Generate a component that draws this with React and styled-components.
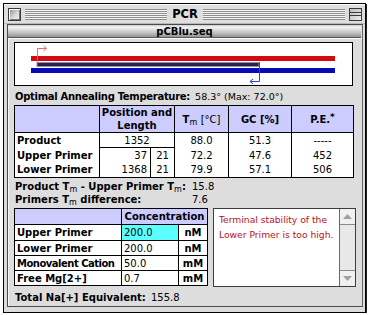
import React from 'react';
import styled, { createGlobalStyle } from 'styled-components';

const GlobalStyle = createGlobalStyle`
  html, body { margin: 0; padding: 0; background: #fff; }
  body { font-family: "DejaVu Sans", sans-serif; }
  * { box-sizing: border-box; }
`;

const BOLD = `"DejaVu Sans", "Liberation Sans", sans-serif`;
const REG = `"DejaVu Sans", "Liberation Sans", sans-serif`;

const Window = styled.div`
  margin: 3px 0 0 3px;
  width: 363px;
  height: 310px;
  border: 1px solid #000;
  box-shadow: 1px 1px 0 #222;
  background: #d6d6d6;
  display: flex;
  flex-direction: column;
`;

const TitleBar = styled.div`
  height: 19px;
  display: flex;
  align-items: center;
  padding: 0 3px 0 4px;
  gap: 4px;
  background: #dedede;
  border-top: 1px solid #fff;
`;

const CloseBox = styled.div`
  width: 13px;
  height: 13px;
  border: 1px solid #3a3a3a;
  background: linear-gradient(135deg, #8c8c8c 0%, #d8d8d8 55%, #f4f4f4 100%);
  box-shadow: inset 1px 1px 0 #fff, inset -1px -1px 0 #777;
`;

const ShadeBox = styled.div`
  width: 13px;
  height: 13px;
  border: 1px solid #3a3a3a;
  background:
    linear-gradient(#3a3a3a, #3a3a3a) 0 3px / 100% 1px no-repeat,
    linear-gradient(#3a3a3a, #3a3a3a) 0 6px / 100% 1px no-repeat,
    linear-gradient(135deg, #bbb, #eee);
`;

const Stripes = styled.div`
  flex: 1;
  height: 11px;
  background: repeating-linear-gradient(to bottom, #8e8e8e 0 1px, #f6f6f6 1px 2px);
`;

const Title = styled.div`
  font-family: ${BOLD};
  font-weight: 700;
  font-size: 11.5px;
  padding: 0 1px;
  color: #000;
`;

const Frame = styled.div`
  flex: 1;
  display: flex;
  padding: 0 2px 5px 3px;
  background: #dcdcdc;
  border-top: 1px solid #b8b8b8;
`;

const DocArea = styled.div`
  flex: 1;
  display: flex;
  flex-direction: column;
  border: 1px solid #4a4a4a;
  border-right-color: #666;
  background: #dddddd;
`;

const DocBar = styled.div`
  height: 13px;
  display: flex;
  align-items: center;
  justify-content: center;
  font-family: ${BOLD};
  font-weight: 700;
  font-size: 10px;
  background: linear-gradient(to bottom, #cfcfcf 0%, #f2f2f2 20%, #d2d2d2 50%, #a8a8a8 85%, #909090 100%);
  border-bottom: 1px solid #5a5a5a;
  margin: 0 1px 0 0;
`;

const Content = styled.div`
  flex: 1;
  display: flex;
  flex-direction: column;
  padding: 4px 6px 0 6px;
  box-shadow: inset 1px 1px 0 #f8f8f8;
`;

const Diagram = styled.div`
  width: 339px;
  height: 44px;
  border: 1px solid #000;
  background: #fff;
  flex: none;
`;

const Label = styled.span`
  font-family: ${BOLD};
  font-weight: 700;
  font-size: 10px;
  letter-spacing: ${(p) => p.$ls || 0}px;
  color: #000;
`;

const Value = styled.span`
  font-family: ${REG};
  font-weight: 400;
  font-size: ${(p) => p.$size || 10}px;
  color: #000;
`;

const Sub = styled.sub`
  font-family: ${REG};
  font-weight: 400;
  font-size: 8px;
  vertical-align: -2px;
  line-height: 0;
  letter-spacing: 0;
`;

const Sup = styled.sup`
  font-size: 9px;
  vertical-align: 3px;
  line-height: 0;
`;

const InfoLine = styled.div`
  height: 19px;
  line-height: 18px;
  padding-left: 1px;
  white-space: nowrap;
`;

const DataTable = styled.table`
  border-collapse: collapse;
  width: ${(p) => p.$w}px;
  table-layout: fixed;
  border: 1px solid #000;
  background: #fff;
  flex: none;
`;

const Col = styled.col`
  width: ${(p) => p.$w}px;
`;

const HeadRow = styled.tr`
  height: ${(p) => p.$h}px;
  background: #ccccff;
  border-bottom: 1px solid #000;
`;

const BodyRow = styled.tr`
  height: ${(p) => p.$h}px;
  border-bottom: ${(p) => (p.$lined ? '1px solid #000' : 'none')};
`;

const Th = styled.th`
  padding: 0;
  font-family: ${BOLD};
  font-weight: 700;
  font-size: 10px;
  line-height: 13px;
  text-align: center;
  vertical-align: middle;
  white-space: nowrap;
  border-left: ${(p) => (p.$first ? 'none' : '1px solid #000')};
`;

const Td = styled.td`
  padding: ${(p) => (p.$align === 'right' ? '0 3px 0 0' : p.$align === 'left' ? '0 0 0 2px' : '0')};
  font-family: ${(p) => (p.$bold ? BOLD : REG)};
  font-weight: ${(p) => (p.$bold ? 700 : 400)};
  font-size: 10px;
  letter-spacing: ${(p) => p.$ls || 0}px;
  text-align: ${(p) => p.$align || 'center'};
  vertical-align: middle;
  white-space: nowrap;
  overflow: hidden;
  background: ${(p) => p.$bg || 'transparent'};
  border-left: ${(p) => (p.$first ? 'none' : '1px solid #000')};
  border-bottom: ${(p) => (p.$under ? '1px solid #000' : 'none')};
`;

const Stats = styled.div`
  display: grid;
  grid-template-columns: 177px auto;
  line-height: 13px;
  margin-top: 2px;
  padding-left: 1px;
  white-space: nowrap;
`;

const Lower = styled.div`
  display: flex;
  gap: 5px;
  margin-top: 2px;
  align-items: flex-start;
`;

const MessageBox = styled.div`
  flex: 1;
  height: 79px;
  display: flex;
  border: 1px solid #3c3c3c;
  background: #fff;
`;

const MessageText = styled.div`
  flex: 1;
  padding: 3px 0 0 5px;
  font-family: ${REG};
  font-size: 9.2px;
  line-height: 15px;
  color: #b8111b;
  white-space: nowrap;
`;

const ScrollBar = styled.div`
  width: 16px;
  display: flex;
  flex-direction: column;
  border-left: 1px solid #6a6a6a;
  background: #ececec;
`;

const ScrollArrow = styled.div`
  height: 16px;
  display: flex;
  align-items: center;
  justify-content: center;
  background: #f0f0f0;
  border-${(p) => (p.$dir === 'up' ? 'bottom' : 'top')}: 1px solid #8a8a8a;
`;

const Track = styled.div`
  flex: 1;
  background: #e8e8e8;
`;

const TotalLine = styled.div`
  height: 15px;
  line-height: 15px;
  margin-top: 1px;
  padding-left: 1px;
  white-space: nowrap;
`;

const Arrow = ({ dir }) => (
  <svg width="9" height="5" viewBox="0 0 9 5">
    {dir === 'up' ? (
      <polygon points="0,5 9,5 4.5,0" fill="#a0a0a0" />
    ) : (
      <polygon points="0,0 9,0 4.5,5" fill="#a0a0a0" />
    )}
  </svg>
);

const PrimerMap = () => (
  <svg width="337" height="42" viewBox="0 0 337 42">
    <rect x="16" y="13" width="304" height="5" fill="#d20a12" />
    <rect x="16" y="25" width="304" height="5" fill="#0a0ab4" />
    <rect x="22" y="19.5" width="222" height="4" fill="#24244a" stroke="#9a8fa8" strokeWidth="1" />
    <path d="M22.5 19 V5.5 H31" fill="none" stroke="#e36a70" strokeWidth="1" />
    <path d="M28.5 3 L31.5 5.5 L28.5 8" fill="none" stroke="#e36a70" strokeWidth="1" />
    <path d="M244.5 19 V38.5 H235" fill="none" stroke="#3a3ad0" strokeWidth="1" />
    <path d="M238 36 L235 38.5 L238 41" fill="none" stroke="#3a3ad0" strokeWidth="1" />
  </svg>
);

export default function App() {
  return (
    <>
      <GlobalStyle />
      <Window>
        <TitleBar>
          <CloseBox />
          <Stripes />
          <Title>PCR</Title>
          <Stripes />
          <ShadeBox />
        </TitleBar>
        <Frame>
          <DocArea>
            <DocBar>pCBlu.seq</DocBar>
            <Content>
              <Diagram>
                <PrimerMap />
              </Diagram>
              <InfoLine>
                <Label $ls={-0.3}>Optimal Annealing Temperature:</Label> <Value $size={9.5}>58.3° (Max: 72.0°)</Value>
              </InfoLine>
              <DataTable $w={339}>
                <colgroup>
                  <Col $w={85} />
                  <Col $w={51} />
                  <Col $w={24} />
                  <Col $w={54} />
                  <Col $w={63} />
                  <Col $w={62} />
                </colgroup>
                <tbody>
                  <HeadRow $h={26}>
                    <Th $first />
                    <Th colSpan={2}>Position and<br />Length</Th>
                    <Th>T<Sub>m</Sub> <Value>[°C]</Value></Th>
                    <Th>GC [%]</Th>
                    <Th>P.E.<Sup>*</Sup></Th>
                  </HeadRow>
                  <BodyRow $h={15}>
                    <Td $first $bold $align="left">Product</Td>
                    <Td colSpan={2} $under>1352</Td>
                    <Td>88.0</Td>
                    <Td>51.3</Td>
                    <Td>-----</Td>
                  </BodyRow>
                  <BodyRow $h={15}>
                    <Td $first $bold $align="left">Upper Primer</Td>
                    <Td $align="right">37</Td>
                    <Td>21</Td>
                    <Td>72.2</Td>
                    <Td>47.6</Td>
                    <Td>452</Td>
                  </BodyRow>
                  <BodyRow $h={15}>
                    <Td $first $bold $align="left">Lower Primer</Td>
                    <Td $align="right">1368</Td>
                    <Td>21</Td>
                    <Td>79.9</Td>
                    <Td>57.1</Td>
                    <Td>506</Td>
                  </BodyRow>
                </tbody>
              </DataTable>
              <Stats>
                <Label>Product T<Sub>m</Sub> - Upper Primer T<Sub>m</Sub>:</Label>
                <Value>15.8</Value>
                <Label>Primers T<Sub>m</Sub> difference:</Label>
                <Value>7.6</Value>
              </Stats>
              <Lower>
                <DataTable $w={193}>
                  <colgroup>
                    <Col $w={107} />
                    <Col $w={57} />
                    <Col $w={29} />
                  </colgroup>
                  <tbody>
                    <HeadRow $h={16}>
                      <Th $first />
                      <Th colSpan={2}>Concentration</Th>
                    </HeadRow>
                    <BodyRow $h={16} $lined>
                      <Td $first $bold $align="left">Upper Primer</Td>
                      <Td $align="left" $bg="#5cffff">200.0</Td>
                      <Td $bold>nM</Td>
                    </BodyRow>
                    <BodyRow $h={15} $lined>
                      <Td $first $bold $align="left">Lower Primer</Td>
                      <Td $align="left">200.0</Td>
                      <Td $bold>nM</Td>
                    </BodyRow>
                    <BodyRow $h={15} $lined>
                      <Td $first $bold $align="left" $ls={-0.5}>Monovalent Cation</Td>
                      <Td $align="left">50.0</Td>
                      <Td $bold>mM</Td>
                    </BodyRow>
                    <BodyRow $h={15}>
                      <Td $first $bold $align="left">Free Mg[2+]</Td>
                      <Td $align="left">0.7</Td>
                      <Td $bold>mM</Td>
                    </BodyRow>
                  </tbody>
                </DataTable>
                <MessageBox>
                  <MessageText>
                    Terminal stability of the
                    <br />
                    Lower Primer is too high.
                  </MessageText>
                  <ScrollBar>
                    <ScrollArrow $dir="up"><Arrow dir="up" /></ScrollArrow>
                    <Track />
                    <ScrollArrow $dir="down"><Arrow dir="down" /></ScrollArrow>
                  </ScrollBar>
                </MessageBox>
              </Lower>
              <TotalLine>
                <Label>Total Na[+] Equivalent:</Label> <Value>155.8</Value>
              </TotalLine>
            </Content>
          </DocArea>
        </Frame>
      </Window>
    </>
  );
}
